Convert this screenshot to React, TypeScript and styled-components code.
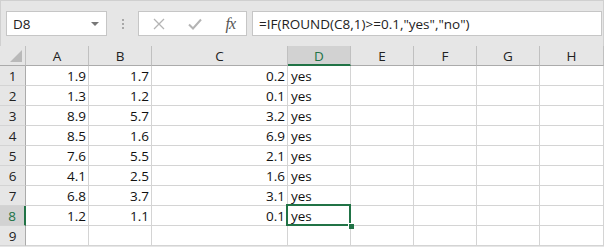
import React from 'react';
import styled, { createGlobalStyle, css } from 'styled-components';

const GREEN = '#217346';
const GRID = '#d4d4d4';

const columns = ['A', 'B', 'C', 'D', 'E', 'F', 'G', 'H'];
const widths = [26, 63, 63, 136, 63, 63, 63, 63, 64];

const rows: [string, string, string][] = [
  ['1.9', '1.7', '0.2'],
  ['1.3', '1.2', '0.1'],
  ['8.9', '5.7', '3.2'],
  ['8.5', '1.6', '6.9'],
  ['7.6', '5.5', '2.1'],
  ['4.1', '2.5', '1.6'],
  ['6.8', '3.7', '3.1'],
  ['1.2', '1.1', '0.1'],
];

const ACTIVE_ROW = 8;
const ACTIVE_COL = 'D';

const GlobalStyle = createGlobalStyle`
  body {
    margin: 0;
    background: #e6e6e6;
    font-family: "Open Sans", "Liberation Sans", sans-serif;
  }
`;

const Page = styled.div`
  width: 604px;
  height: 247px;
  overflow: hidden;
  background: #e6e6e6;
`;

const Toolbar = styled.div`
  display: flex;
  align-items: center;
  height: 46px;
  padding: 0 1px 0 5px;
  box-sizing: border-box;
  border: 1px solid #d0d0d0;
  border-bottom: none;
`;

const NameBox = styled.div`
  display: flex;
  align-items: center;
  justify-content: space-between;
  width: 101px;
  height: 25px;
  box-sizing: border-box;
  padding: 0 7px 0 6px;
  background: #fff;
  border: 1px solid #c6c6c6;
  font-size: 13.5px;
  color: #222;
`;

const DropArrow = styled.span`
  width: 0;
  height: 0;
  border-left: 4px solid transparent;
  border-right: 4px solid transparent;
  border-top: 4px solid #777;
`;

const Grip = styled.div`
  display: flex;
  flex-direction: column;
  gap: 2px;
  margin: 0 14px 0 15px;
  span {
    width: 2px;
    height: 2px;
    background: #a8a8a8;
  }
`;

const FxButtons = styled.div`
  display: flex;
  align-items: center;
  justify-content: space-between;
  width: 109px;
  height: 25px;
  box-sizing: border-box;
  padding: 0 11px 0 14px;
  background: #fff;
  border: 1px solid #c6c6c6;
`;

const Fx = styled.span`
  font-family: "Liberation Serif", serif;
  font-style: italic;
  font-size: 16px;
  color: #555;
  letter-spacing: -1px;
`;

const FormulaInput = styled.div`
  flex: 1;
  height: 25px;
  margin-left: 5px;
  box-sizing: border-box;
  padding: 0 6px;
  display: flex;
  align-items: center;
  background: #fff;
  border: 1px solid #c6c6c6;
  font-size: 13.5px;
  color: #222;
  white-space: nowrap;
`;

const Sheet = styled.div`
  display: grid;
  grid-template-columns: ${widths.map((w) => `${w}px`).join(' ')};
  grid-auto-rows: 20px;
  background: #fff;
  font-size: 13.5px;
`;

const HeaderCell = styled.div<{ $active?: boolean }>`
  display: flex;
  align-items: center;
  justify-content: center;
  box-sizing: border-box;
  background: ${(p) => (p.$active ? '#d2d2d2' : '#e6e6e6')};
  color: ${(p) => (p.$active ? GREEN : '#222')};
  border-right: 1px solid #c0c0c0;
  border-bottom: ${(p) => (p.$active ? `2px solid ${GREEN}` : '1px solid #ababab')};
  padding-top: 1px;
`;

const Corner = styled.div`
  position: relative;
  background: #e6e6e6;
  border-right: 1px solid #c0c0c0;
  border-bottom: 1px solid #ababab;
  box-sizing: border-box;
  &::after {
    content: '';
    position: absolute;
    right: 3px;
    bottom: 3px;
    width: 0;
    height: 0;
    border-left: 12px solid transparent;
    border-bottom: 12px solid #b9b9b9;
  }
`;

const RowHeader = styled.div<{ $active?: boolean }>`
  display: flex;
  align-items: center;
  justify-content: center;
  box-sizing: border-box;
  background: ${(p) => (p.$active ? '#d2d2d2' : '#e6e6e6')};
  color: ${(p) => (p.$active ? GREEN : '#222')};
  border-bottom: 1px solid ${GRID};
  border-right: ${(p) => (p.$active ? `2px solid ${GREEN}` : '1px solid #ababab')};
  padding-top: 1px;
`;

const Cell = styled.div<{ $num?: boolean; $selected?: boolean }>`
  position: relative;
  display: flex;
  align-items: center;
  box-sizing: border-box;
  padding: 1px 2px 0 3px;
  border-right: 1px solid ${GRID};
  border-bottom: 1px solid ${GRID};
  color: #111;
  justify-content: ${(p) => (p.$num ? 'flex-end' : 'flex-start')};
  ${(p) =>
    p.$selected &&
    css`
      &::before {
        content: '';
        position: absolute;
        left: -2px;
        top: -2px;
        right: -1px;
        bottom: -1px;
        border: 2px solid ${GREEN};
      }
      &::after {
        content: '';
        position: absolute;
        right: -4px;
        bottom: -4px;
        width: 5px;
        height: 5px;
        background: ${GREEN};
        border: 1px solid #fff;
        border-width: 1px 0 0 1px;
        z-index: 1;
      }
    `}
`;

function CancelIcon() {
  return (
    <svg width="12" height="12" viewBox="0 0 12 12">
      <path d="M1 1 L11 11 M11 1 L1 11" stroke="#b4b4b4" strokeWidth="1.3" fill="none" />
    </svg>
  );
}

function EnterIcon() {
  return (
    <svg width="14" height="12" viewBox="0 0 14 12">
      <path d="M1 6.5 L5 10.5 L13 1.5" stroke="#b4b4b4" strokeWidth="2" fill="none" />
    </svg>
  );
}

export default function App() {
  return (
    <Page>
      <GlobalStyle />
      <Toolbar>
        <NameBox>
          <span>D8</span>
          <DropArrow />
        </NameBox>
        <Grip>
          <span />
          <span />
          <span />
        </Grip>
        <FxButtons>
          <CancelIcon />
          <EnterIcon />
          <Fx>fx</Fx>
        </FxButtons>
        <FormulaInput>=IF(ROUND(C8,1)&gt;=0.1,"yes","no")</FormulaInput>
      </Toolbar>
      <Sheet>
        <Corner />
        {columns.map((c) => (
          <HeaderCell key={c} $active={c === ACTIVE_COL}>
            {c}
          </HeaderCell>
        ))}
        {[...rows, null].map((r, i) => {
          const n = i + 1;
          return (
            <React.Fragment key={n}>
              <RowHeader $active={n === ACTIVE_ROW}>{n}</RowHeader>
              <Cell $num>{r?.[0]}</Cell>
              <Cell $num>{r?.[1]}</Cell>
              <Cell $num>{r?.[2]}</Cell>
              <Cell $selected={n === ACTIVE_ROW}>{r ? 'yes' : ''}</Cell>
              <Cell />
              <Cell />
              <Cell />
              <Cell />
            </React.Fragment>
          );
        })}
      </Sheet>
    </Page>
  );
}
